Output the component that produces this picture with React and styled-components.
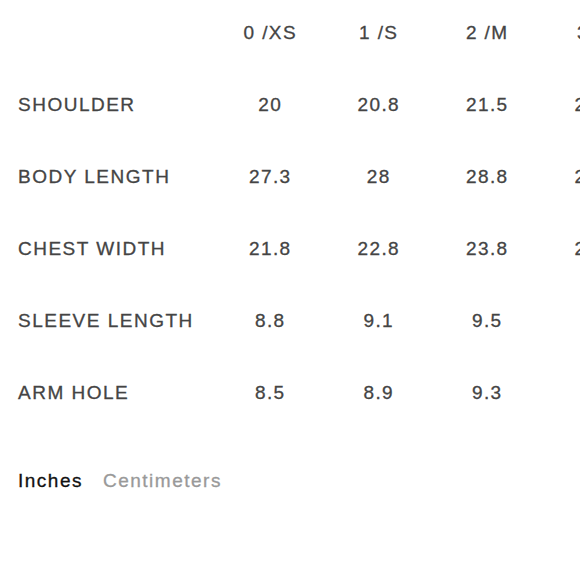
import React from "react";
import styled, { createGlobalStyle } from "styled-components";

const Global = createGlobalStyle`
  html, body { margin: 0; padding: 0; background: #fff; overflow: hidden; }
  body { font-family: "Liberation Sans", Arial, sans-serif; }
`;

const Page = styled.div`
  width: 580px;
  height: 580px;
  overflow: hidden;
  padding: 1px 0 0 18px;
  box-sizing: border-box;
`;

const Table = styled.div`
  display: grid;
  grid-template-columns: 198px repeat(4, 108.5px);
  grid-template-rows: 68px repeat(5, 72px);
  width: max-content;
`;

const Cell = styled.div`
  display: flex;
  align-items: center;
  justify-content: ${(p) => (p.$label ? "flex-start" : "center")};
  font-size: 19px;
  letter-spacing: ${(p) => (p.$label ? "1.5px" : "1.4px")};
  color: #444;
  white-space: nowrap;
  -webkit-text-stroke: 0.3px #444;
  padding-bottom: ${(p) => (p.$head ? "4px" : "0")};
`;

const Units = styled.div`
  display: flex;
  gap: 20px;
  margin-top: 42px;
  font-size: 19px;
  line-height: 20px;
  letter-spacing: 1.5px;
`;

const Unit = styled.span`
  color: ${(p) => (p.$active ? "#111" : "#999")};
  -webkit-text-stroke: 0.3px ${(p) => (p.$active ? "#111" : "#999")};
`;

const sizes = ["0 /XS", "1 /S", "2 /M", "3 /L"];
const rows = [
  ["SHOULDER", "20", "20.8", "21.5", "22.3"],
  ["BODY LENGTH", "27.3", "28", "28.8", "29.5"],
  ["CHEST WIDTH", "21.8", "22.8", "23.8", "24.8"],
  ["SLEEVE LENGTH", "8.8", "9.1", "9.5", "9.8"],
  ["ARM HOLE", "8.5", "8.9", "9.3", "9.7"],
];

export default function App() {
  return (
    <Page>
      <Global />
      <Table>
        <Cell $label $head />
        {sizes.map((s) => (
          <Cell key={s} $head>{s}</Cell>
        ))}
        {rows.map((r) =>
          r.map((v, i) => (
            <Cell key={r[0] + i} $label={i === 0}>{v}</Cell>
          ))
        )}
      </Table>
      <Units>
        <Unit $active>Inches</Unit>
        <Unit>Centimeters</Unit>
      </Units>
    </Page>
  );
}
